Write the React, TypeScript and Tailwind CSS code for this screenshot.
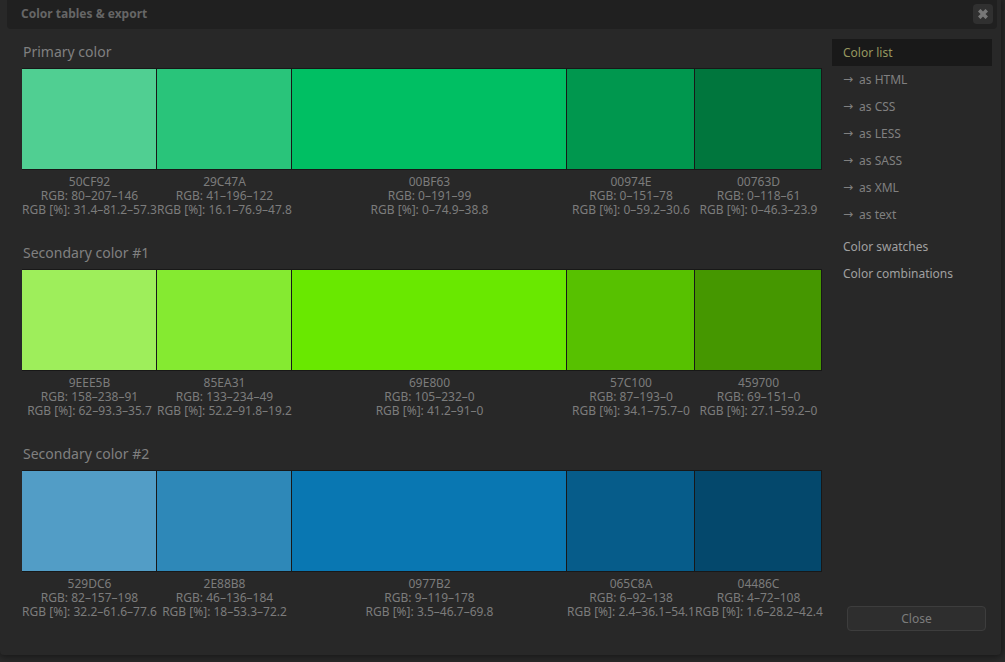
type Swatch = { hex: string; fill: string; rgb: string; pct: string };
type Group = { title: string; swatches: Swatch[] };

const groups: Group[] = [
  {
    title: "Primary color",
    swatches: [
      { hex: "50CF92", fill: "bg-[#50cf92]", rgb: "80–207–146", pct: "31.4–81.2–57.3" },
      { hex: "29C47A", fill: "bg-[#29c47a]", rgb: "41–196–122", pct: "16.1–76.9–47.8" },
      { hex: "00BF63", fill: "bg-[#00bf63]", rgb: "0–191–99", pct: "0–74.9–38.8" },
      { hex: "00974E", fill: "bg-[#00974e]", rgb: "0–151–78", pct: "0–59.2–30.6" },
      { hex: "00763D", fill: "bg-[#00763d]", rgb: "0–118–61", pct: "0–46.3–23.9" },
    ],
  },
  {
    title: "Secondary color #1",
    swatches: [
      { hex: "9EEE5B", fill: "bg-[#9eee5b]", rgb: "158–238–91", pct: "62–93.3–35.7" },
      { hex: "85EA31", fill: "bg-[#85ea31]", rgb: "133–234–49", pct: "52.2–91.8–19.2" },
      { hex: "69E800", fill: "bg-[#69e800]", rgb: "105–232–0", pct: "41.2–91–0" },
      { hex: "57C100", fill: "bg-[#57c100]", rgb: "87–193–0", pct: "34.1–75.7–0" },
      { hex: "459700", fill: "bg-[#459700]", rgb: "69–151–0", pct: "27.1–59.2–0" },
    ],
  },
  {
    title: "Secondary color #2",
    swatches: [
      { hex: "529DC6", fill: "bg-[#529dc6]", rgb: "82–157–198", pct: "32.2–61.6–77.6" },
      { hex: "2E88B8", fill: "bg-[#2e88b8]", rgb: "46–136–184", pct: "18–53.3–72.2" },
      { hex: "0977B2", fill: "bg-[#0977b2]", rgb: "9–119–178", pct: "3.5–46.7–69.8" },
      { hex: "065C8A", fill: "bg-[#065c8a]", rgb: "6–92–138", pct: "2.4–36.1–54.1" },
      { hex: "04486C", fill: "bg-[#04486c]", rgb: "4–72–108", pct: "1.6–28.2–42.4" },
    ],
  },
];

const exportFormats = ["HTML", "CSS", "LESS", "SASS", "XML", "text"];

function ColorTable({ title, swatches }: Group) {
  return (
    <section>
      <h2 className="pt-[13px] pb-1.5 pl-px text-sm leading-5 text-[#808080]">{title}</h2>
      <table className="w-full table-fixed border-separate border-spacing-0 text-center text-xs leading-[14px] text-[#7c7c7c]">
        <colgroup>
          <col className="w-[135px]" />
          <col className="w-[135px]" />
          <col />
          <col className="w-[128px]" />
          <col className="w-[127px]" />
        </colgroup>
        <tbody>
          <tr>
            {swatches.map((s) => (
              <td key={s.hex} className={`h-[102px] border-y border-r border-[#181818] p-0 ${s.fill}`} />
            ))}
          </tr>
          <tr>
            {swatches.map((s) => (
              <td key={s.hex} className="h-[60px] p-0 pt-[5px] align-top whitespace-nowrap">
                <div>{s.hex}</div>
                <div>RGB: {s.rgb}</div>
                <div>RGB [%]: {s.pct}</div>
              </td>
            ))}
          </tr>
        </tbody>
      </table>
    </section>
  );
}

export default function App() {
  return (
    <div className="flex min-h-screen flex-col bg-[#2b2b2b] pr-1 pb-[7px] font-['Noto_Sans','Open_Sans',sans-serif]">
      <main className="flex grow flex-col rounded-b bg-[#282828] pr-1 pl-[3px] shadow-[0_0_8px_2px_rgba(0,0,0,0.5)]">
        <header className="ml-1 flex h-[29px] items-center justify-between rounded-b bg-[#202020] pr-1 pb-px pl-3.5">
          <h1 className="text-xs font-bold text-[#666666]">Color tables &amp; export</h1>
          <button
            type="button"
            aria-label="Close dialog"
            className="flex size-5 items-center justify-center rounded-sm bg-[#303030]"
          >
            <svg viewBox="0 0 10 10" className="size-2.5" stroke="#777777" strokeWidth="3.6" aria-hidden="true">
              <path d="M1.2 1.2l7.6 7.6M8.8 1.2l-7.6 7.6" />
            </svg>
          </button>
        </header>
        <div className="flex grow pr-[5px] pl-[19px]">
          <div className="grow">
            {groups.map((g) => (
              <ColorTable key={g.title} {...g} />
            ))}
          </div>
          <aside className="ml-2.5 flex w-40 shrink-0 flex-col justify-between pt-2.5 text-xs">
            <nav className="flex flex-col">
              <a href="#list" className="bg-[#191919] px-[11px] leading-[27px] text-[#97975f]">
                Color list
              </a>
              {exportFormats.map((f) => (
                <a key={f} href={`#${f}`} className="flex gap-1.5 px-[11px] leading-[27px] text-[#808080]">
                  <span className="font-['DejaVu_Sans',sans-serif]">→</span>
                  <span>as {f}</span>
                </a>
              ))}
              <a href="#swatches" className="mt-[5px] px-[11px] leading-[27px] text-[#a0a0a0]">
                Color swatches
              </a>
              <a href="#combinations" className="px-[11px] leading-[27px] text-[#a0a0a0]">
                Color combinations
              </a>
            </nav>
            <button
              type="button"
              className="mr-1.5 mb-6 ml-[15px] h-[25px] rounded-sm border border-[#3d3d3d] bg-[#2e2e2e] text-[#7c7c7c]"
            >
              Close
            </button>
          </aside>
        </div>
      </main>
    </div>
  );
}
